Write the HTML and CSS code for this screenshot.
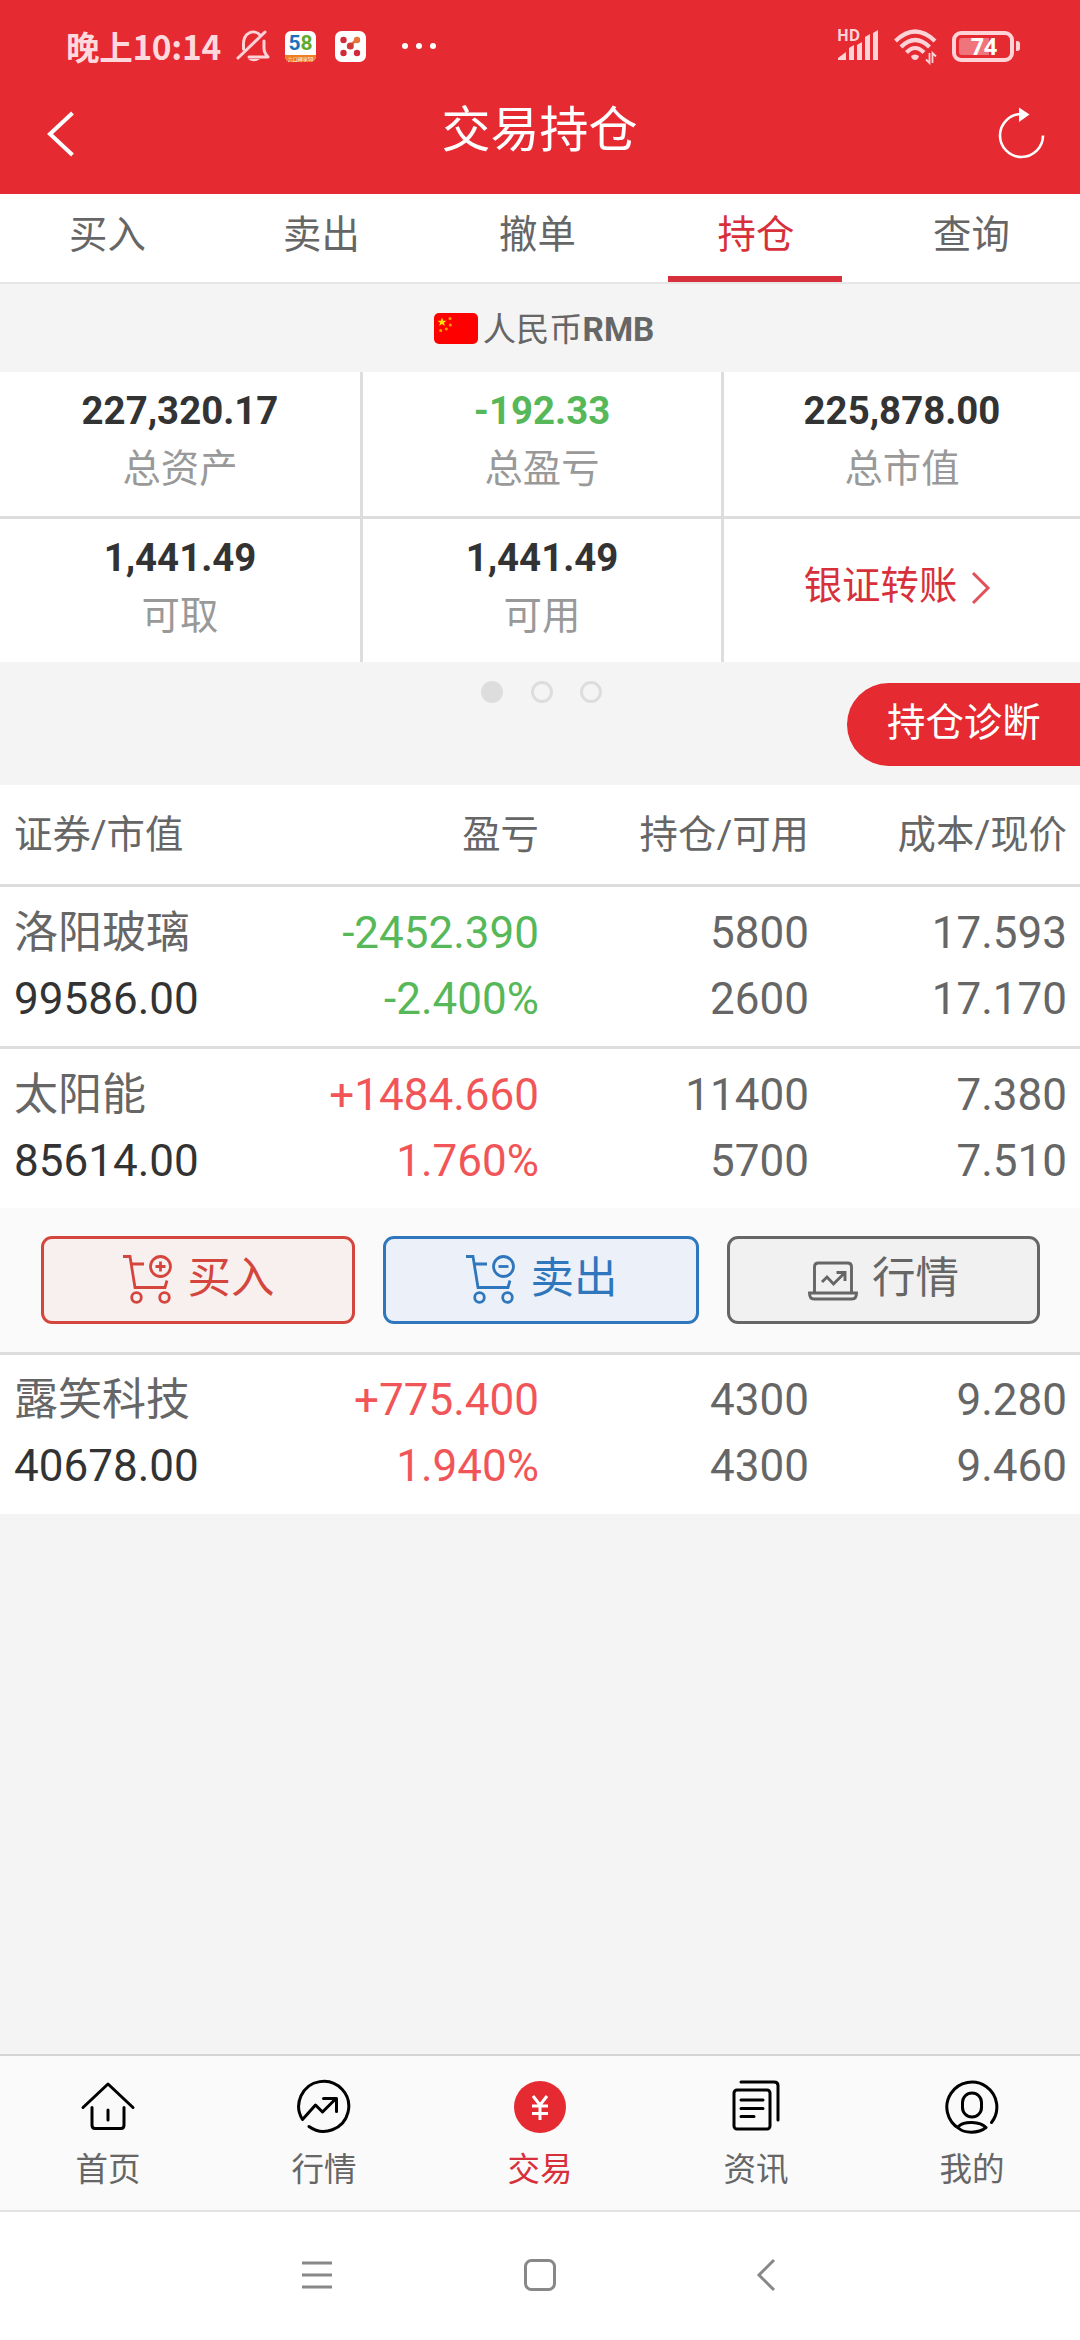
FILE: index.html
```html
<!DOCTYPE html>
<html lang="zh-CN">
<head>
<meta charset="utf-8">
<title>交易持仓</title>
<link rel="stylesheet" href="styles.css">
</head>
<body>
<div class="app">
  <header class="header">
    <div class="status">
      <span class="status-time">晚上10:14</span>
      <svg class="ic-bell" width="34" height="34" viewBox="0 0 34 34" fill="none" stroke="#fdd3d8" stroke-width="3" stroke-linecap="round" stroke-linejoin="round"><path d="M24 6C21.500 3 17 2 13 4C8.500 6.500 7.500 11 7.500 15V20M28 12V19C28 23 29 25 32 28H13M2 29L29 3"/><path d="M12 30H24Q18 34.500 12 30Z" fill="#fdd3d8" stroke="none"/></svg>
      <div class="ic-58"><b><i class="five">5</i><i class="eight">8</i></b><small>六口碑享50</small></div>
      <svg class="ic-dice" width="31" height="31" viewBox="0 0 31 31"><rect width="31" height="31" rx="6.500" fill="#fff"/><path d="M15 15L22 8" stroke="#e8743a" stroke-width="2.500"/><circle cx="8.500" cy="9" r="3.200" fill="#cf2b3a"/><circle cx="22" cy="9" r="3.200" fill="#e8743a"/><circle cx="15.300" cy="15" r="3.500" fill="#cf3a35"/><circle cx="8.500" cy="22" r="3.200" fill="#cf2b3a"/><circle cx="22" cy="22" r="3.200" fill="#cf2b3a"/></svg>
      <svg class="ic-more" width="36" height="8" viewBox="0 0 36 8" fill="#fff"><circle cx="4" cy="4" r="3"/><circle cx="18" cy="4" r="3"/><circle cx="32" cy="4" r="3"/></svg>
      <span class="grow"></span>
      <div class="signal"><span>HD</span><svg width="42" height="34" viewBox="0 0 42 34" fill="#fdd3d8"><path d="M1 31V29L9 23V31ZM12 31V19L17 16V31ZM20 31V16L25 13V31ZM28 31V8L33 5V31ZM36 31V4L41 1V31Z"/></svg></div>
      <svg class="ic-wifi" width="44" height="36" viewBox="0 0 44 36" fill="none" stroke="#fdd3d8" stroke-width="4.200"><path d="M1.500 12Q21 -7 41 12M7 18Q21 4 35.500 18M12.500 23.500Q21 14.500 30 23.500"/><path d="M17 27Q21 24 25 27Q24 31 21 31Q18 31 17 27Z" fill="#fdd3d8" stroke="none"/><path d="M35.500 24V34L32 30.500M38.500 34V24L42 27.500" stroke-width="1.800"/></svg>
      <div class="battery"><span>74</span></div><i class="nub"></i>
    </div>
    <div class="titlebar">
      <svg width="28" height="48" viewBox="0 0 28 48" fill="none" stroke="#fff" stroke-width="4"><path d="M25.500 3L3 24L25.500 45"/></svg>
      <h1>交易持仓</h1>
      <svg class="ic-refresh" width="48" height="54" viewBox="0 0 48 54" fill="none" stroke="#fff" stroke-width="2.600"><path d="M23.500 9A21.500 21.500 0 1 0 45 30.500"/><path d="M21 2.500L31.500 9.500L21 17Z" fill="#fff" stroke="none"/></svg>
    </div>
  </header>

  <nav class="tabs">
    <a>买入</a><a>卖出</a><a>撤单</a><a class="active">持仓</a><a>查询</a>
  </nav>

  <div class="currency">
    <svg width="44" height="31" viewBox="0 0 44 31"><rect width="44" height="31" rx="5" fill="#fe0000"/><g fill="#ffe600"><path d="M8 4.500L9.200 7.700H12.500L9.900 9.800L10.900 13L8 11L5.100 13L6.100 9.800L3.500 7.700H6.800Z"/><g fill="#ffa000"><circle cx="16" cy="5.500" r="1.500"/><circle cx="16.300" cy="12" r="1.500"/><circle cx="12.300" cy="16" r="1.500"/><circle cx="6.700" cy="17.500" r="1.500"/></g></g></svg>
    <span>人民币<b>RMB</b></span>
  </div>

  <section class="summary">
    <div class="cell"><strong>227,320.17</strong><span>总资产</span></div>
    <div class="cell"><strong class="down">-192.33</strong><span>总盈亏</span></div>
    <div class="cell"><strong>225,878.00</strong><span>总市值</span></div>
    <div class="cell"><strong>1,441.49</strong><span>可取</span></div>
    <div class="cell"><strong>1,441.49</strong><span>可用</span></div>
    <div class="cell transfer"><span>银证转账</span><svg width="20" height="34" viewBox="0 0 20 34" fill="none" stroke="#e0525a" stroke-width="3"><path d="M2 2L17 17L2 32"/></svg></div>
  </section>

  <div class="pager">
    <div class="dots"><i class="on"></i><i></i><i></i></div>
    <a class="diagnose">持仓诊断</a>
  </div>

  <section class="holdings">
    <div class="row head"><span>证券/市值</span><span>盈亏</span><span>持仓/可用</span><span>成本/现价</span></div>
    <div class="row">
      <span>洛阳玻璃</span><span class="down">-2452.390</span><span>5800</span><span>17.593</span>
      <span class="value">99586.00</span><span class="down">-2.400%</span><span>2600</span><span>17.170</span>
    </div>
    <div class="row open">
      <span>太阳能</span><span class="up">+1484.660</span><span>11400</span><span>7.380</span>
      <span class="value">85614.00</span><span class="up">1.760%</span><span>5700</span><span>7.510</span>
    </div>
    <div class="actions">
      <a class="btn buy"><svg width="52" height="50" viewBox="0 0 52 50" fill="none" stroke="currentColor" stroke-width="2.800"><path d="M1 2.500H8L13 33.500H43L45 26.500M9 10H22"/><circle cx="38.500" cy="12.500" r="10"/><path d="M33.500 12.500H43.500M38.500 7.500V17.500"/><circle cx="14.500" cy="43.500" r="4.800"/><circle cx="42.500" cy="43.500" r="4.800"/></svg>买入</a>
      <a class="btn sell"><svg width="52" height="50" viewBox="0 0 52 50" fill="none" stroke="currentColor" stroke-width="2.800"><path d="M1 2.500H8L13 33.500H43L45 26.500M9 10H22"/><circle cx="38.500" cy="12.500" r="10"/><path d="M33.500 12.500H43.500"/><circle cx="14.500" cy="43.500" r="4.800"/><circle cx="42.500" cy="43.500" r="4.800"/></svg>卖出</a>
      <a class="btn quote"><svg width="50" height="40" viewBox="0 0 50 40" fill="none" stroke="currentColor" stroke-width="2.900"><path d="M6.500 31V6Q6.500 2 10.500 2H39.500Q43.500 2 43.500 6V31M1.500 32H48.500Q48.500 38 44 38H6Q1.500 38 1.500 32ZM14 21L19 16L25.500 23L36.500 12M28.500 11.500H37V20"/></svg>行情</a>
    </div>
    <div class="row last">
      <span>露笑科技</span><span class="up">+775.400</span><span>4300</span><span>9.280</span>
      <span class="value">40678.00</span><span class="up">1.940%</span><span>4300</span><span>9.460</span>
    </div>
  </section>

  <div class="grow"></div>

  <nav class="bottom">
    <a><svg width="56" height="56" viewBox="0 0 56 56"><path d="M3 28.500L28 5L53 28.500M12 28.500V46Q12 49.500 15 49.500H41Q44 49.500 44 46V28.500M28 31V41"/></svg>首页</a>
    <a><svg width="56" height="56" viewBox="0 0 56 56"><path d="M13 47.500A25 25 0 1 0 6.500 40.500L19.500 26L26.500 33L39.500 20M27.500 19.500H40.500V32.500"/></svg>行情</a>
    <a class="active"><svg width="56" height="56" viewBox="0 0 56 56"><circle cx="28" cy="28" r="26" class="disc"/><path class="yen" d="M21 17L28 26L35 17M28 26V41M20 27H36M20 34.500H36"/></svg>交易</a>
    <a><svg width="56" height="56" viewBox="0 0 56 56"><rect x="6" y="11" width="36" height="39" rx="3"/><path d="M13 3H46Q50 3 50 6.500V41M13 21H35M13 29.500H35M13 37.500H26"/></svg>资讯</a>
    <a><svg width="56" height="56" viewBox="0 0 56 56"><path d="M47.500 43.500A25 25 0 1 0 15 49.500C20 54 34 55 42 48.500C36 42 20 42 15 47"/><rect x="18.500" y="14" width="19" height="24" rx="9.500"/></svg>我的</a>
  </nav>
  <div class="sysnav">
    <svg width="32" height="34" viewBox="0 0 32 34"><path d="M1 5H31M1 17H31M1 29H31"/></svg>
    <svg class="home" width="34" height="34" viewBox="0 0 34 34"><rect x="2.500" y="2.500" width="29" height="29" rx="6"/></svg>
    <svg width="20" height="34" viewBox="0 0 20 34"><path d="M18 2L3 17L18 32"/></svg>
  </div>
</div>
</body>
</html>
```
FILE: styles.css
```css
* { box-sizing: border-box; }
body { margin: 0; background: #f4f4f4; }
.app {
  width: 1080px; height: 2340px; display: flex; flex-direction: column; overflow: hidden;
  font-family: Roboto, "Noto Sans CJK SC", sans-serif; color: #666; font-size: 38.400px;
}
.grow { flex: 1; }
svg { flex: none; display: block; }
i { font-style: normal; }

.header { height: 194px; background: #e52a32; color: #fff; flex: none; }
.status { height: 92px; padding: 0 60px 0 66px; display: flex; align-items: center; }
.status-time { width: 170px; font: bold 33.500px/44px "Noto Sans CJK SC", sans-serif; color: #fdd9dd; white-space: nowrap; letter-spacing: -0.300px; padding-bottom: 1px; }
.ic-58 { width: 31px; height: 31px; margin-left: 15px; border-radius: 6px; background: #fff; display: flex; flex-direction: column; justify-content: space-between; align-items: center; }
.ic-58 b { font: bold 21px/24px Roboto, sans-serif; }
.five { color: #1d6fb8; }
.eight { color: #5fa92c; }
.ic-58 small { width: 31px; height: 7px; border-radius: 0 0 6px 6px; background: #ef7d22; color: #fff; font: 5px/7px "Noto Sans CJK SC", sans-serif; text-align: center; white-space: nowrap; }
.ic-dice { margin-left: 19px; }
.ic-more { margin-left: 35px; }
.signal { position: relative; }
.signal span { position: absolute; left: 0; top: -1px; font: bold 15.500px/15px "Open Sans", sans-serif; color: #fdd3d8; }
.ic-wifi { margin: 1px 14px 0 15px; }
.battery { width: 62px; height: 31px; border: 4px solid #fdd3d8; border-radius: 9px; padding: 3px; display: flex; }
.battery span { width: 100%; border-radius: 3px; background: linear-gradient(90deg, #f0747b 62%, transparent 62%); font: bold 23px/17px "Noto Sans", sans-serif; text-align: center; text-indent: 2px; }
.nub { width: 4px; height: 10px; margin-left: 2px; border-radius: 0 3px 3px 0; background: #fdd3d8; }
.titlebar { height: 84px; padding: 0 34px 0 47px; display: flex; align-items: center; justify-content: space-between; }
.titlebar h1 { margin: 0; padding-bottom: 7px; padding-left: 6px; font-size: 49px; font-weight: normal; line-height: 72px; }
.ic-refresh { margin-bottom: 4px; }

.tabs { height: 90px; flex: none; background: #fff; border-bottom: 2px solid #e6e6e6; display: flex; }
.tabs a { width: 216px; line-height: 82px; padding-right: 1px; text-align: center; display: flex; flex-direction: column; align-items: center; justify-content: space-between; }
.tabs a:nth-child(2), .tabs a:nth-child(3) { padding-right: 5px; }
.tabs .active { color: #d8303b; padding: 0; }
.tabs .active::after { content: ""; width: 174px; height: 6px; margin-left: -2px; background: #d8303b; }

.currency { height: 88px; flex: none; display: flex; align-items: center; justify-content: center; gap: 5px; font-size: 33.300px; padding-left: 8px; padding-bottom: 3px; }
.currency svg { margin-top: 3px; }

.summary { flex: none; display: grid; grid-template-columns: 363px 361px 356px; grid-template-rows: 147px 143px; background: #fff; }
.cell { display: flex; flex-direction: column; align-items: center; border-right: 3px solid #ddd; border-bottom: 3px solid #ddd; padding-top: 10px; }
.cell:nth-child(3n) { border-right: 0; }
.cell:nth-child(n+4) { border-bottom: 0; }
.cell strong { color: #333; line-height: 58px; height: 58px; }
.cell span { color: #999; line-height: 58px; height: 58px; }
.cell .down, .down { color: #56b858; }
.cell.transfer { flex-direction: row; justify-content: center; gap: 14px; padding: 0 9px 10px 0; }
.cell.transfer span { color: #d8303b; }
.transfer svg { margin-top: 5px; }
.up { color: #f15558; }

.pager { height: 123px; flex: none; display: flex; justify-content: space-between; padding: 19px 0 0 481px; }
.dots { display: flex; gap: 27.500px; }
.dots i { width: 22px; height: 22px; border: 3px solid #ddd; border-radius: 50%; }
.dots .on { background: #ddd; }
.diagnose { width: 233px; height: 83px; margin-top: 2px; padding-left: 40px; border-radius: 42px 0 0 42px; background: #e52a32; color: #fff; line-height: 79px; }

.holdings { flex: none; background: #fff; }
.row { display: grid; grid-template-columns: 240px 285px 270px 258px; grid-auto-rows: 66px; height: 162px; padding: 13px 13px 0 14px; border-bottom: 3px solid #ddd; font-size: 44px; line-height: 66px; text-align: right; white-space: nowrap; }
.row > :nth-child(4n+1) { text-align: left; }
.row.head { height: 102px; padding-top: 17px; font-size: 38.400px; }
.row.open, .row.last { height: 159px; border-bottom: 0; }
.row.last { padding-top: 12px; }
.value { color: #333; }
.actions { height: 147px; padding: 28px 0 0 41px; display: flex; gap: 28px; background: #fafafa; border-bottom: 3px solid #ddd; }
.btn { width: 314px; height: 88px; border: 3px solid; border-radius: 11px; display: flex; align-items: center; justify-content: center; padding-bottom: 2px; font-size: 43.500px; line-height: 78px; gap: 14px; }
.buy { color: #d4463d; background: #f8f0ee; }
.sell { width: 316px; color: #2f77bd; background: #ecf1f9; }
.quote { width: 313px; color: #666; background: #f1f1f1; }
.quote svg { margin-top: 4px; }

.bottom { height: 156px; flex: none; border-top: 2px solid #d5d5d5; background: #fafafa; display: flex; }
.bottom a { width: 216px; padding-top: 23px; display: flex; flex-direction: column; align-items: center; font-size: 32.500px; line-height: 70px; }
.bottom svg { fill: none; stroke: #000; stroke-width: 3; stroke-linecap: round; stroke-linejoin: round; }
.bottom .active { color: #d8303b; }
.bottom .disc { fill: #e52a32; stroke: none; }
.bottom .yen { stroke: #fff; stroke-linecap: butt; }
.sysnav { height: 130px; flex: none; border-top: 2px solid #e3e3e3; background: #fff; display: flex; justify-content: space-between; padding: 46px 304px 0 301px; }
.sysnav svg { fill: none; stroke: #888; stroke-width: 3; }
.sysnav .home { margin-right: 9px; }
```
